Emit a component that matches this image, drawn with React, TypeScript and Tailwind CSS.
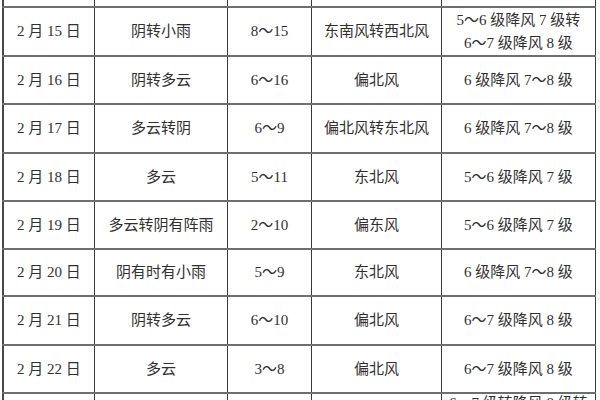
import React from "react";

type Row = { d: string; w: string; t: string; f: string; l: string[]; h: string };

const rows: Row[] = [
  { d: "2 月 15 日", w: "阴转小雨", t: "8～15", f: "东南风转西北风", l: ["5～6 级降风 7 级转", "6～7 级降风 8 级"], h: "h-[49px]" },
  { d: "2 月 16 日", w: "阴转多云", t: "6～16", f: "偏北风", l: ["6 级降风 7～8 级"], h: "h-[48px]" },
  { d: "2 月 17 日", w: "多云转阴", t: "6～9", f: "偏北风转东北风", l: ["6 级降风 7～8 级"], h: "h-[49px]" },
  { d: "2 月 18 日", w: "多云", t: "5～11", f: "东北风", l: ["5～6 级降风 7 级"], h: "h-[48px]" },
  { d: "2 月 19 日", w: "多云转阴有阵雨", t: "2～10", f: "偏东风", l: ["5～6 级降风 7 级"], h: "h-[48px]" },
  { d: "2 月 20 日", w: "阴有时有小雨", t: "5～9", f: "东北风", l: ["6 级降风 7～8 级"], h: "h-[47px]" },
  { d: "2 月 21 日", w: "阴转多云", t: "6～10", f: "偏北风", l: ["6～7 级降风 8 级"], h: "h-[49px]" },
  { d: "2 月 22 日", w: "多云", t: "3～8", f: "偏北风", l: ["6～7 级降风 8 级"], h: "h-[48px]" },
];

const grid = "grid grid-cols-[93px_133px_84px_130px_154px]";
const cell = "flex items-center justify-center text-center border-r border-[#3a3a3a]";
const first = "border-l-2 border-l-[#4a4a4a]";

export default function App() {
  return (
    <div
      className="w-[600px] h-[400px] overflow-hidden bg-white text-[#303030] text-[15px] pl-[2px]"
      style={{ fontFamily: '"Liberation Serif", "Noto Sans CJK SC", serif' }}
    >
      <div className="w-[594px]">
        <div className={`${grid} h-[8px] border-b-2 border-[#6e6e6e]`}>
          <div className={`${cell} ${first}`} />
          <div className={cell} />
          <div className={cell} />
          <div className={cell} />
          <div className={cell} />
        </div>
        {rows.map((r) => (
          <div key={r.d} className={`${grid} ${r.h} border-b-2 border-[#6e6e6e]`}>
            <div className={`${cell} ${first} whitespace-pre`}>{r.d}</div>
            <div className={cell}>{r.w}</div>
            <div className={cell}>{r.t}</div>
            <div className={cell}>{r.f}</div>
            <div className={`${cell} flex-col leading-[23px]`}>
              {r.l.map((x) => (
                <span key={x} className="whitespace-pre">{x}</span>
              ))}
            </div>
          </div>
        ))}
        <div className={`${grid} h-[6px]`}>
          <div className={`${cell} ${first}`} />
          <div className={cell} />
          <div className={cell} />
          <div className={cell} />
          <div className={`${cell} items-start overflow-hidden leading-[18px]`}>
            <span className="whitespace-pre">6～7 级转降风 8 级转</span>
          </div>
        </div>
      </div>
    </div>
  );
}
